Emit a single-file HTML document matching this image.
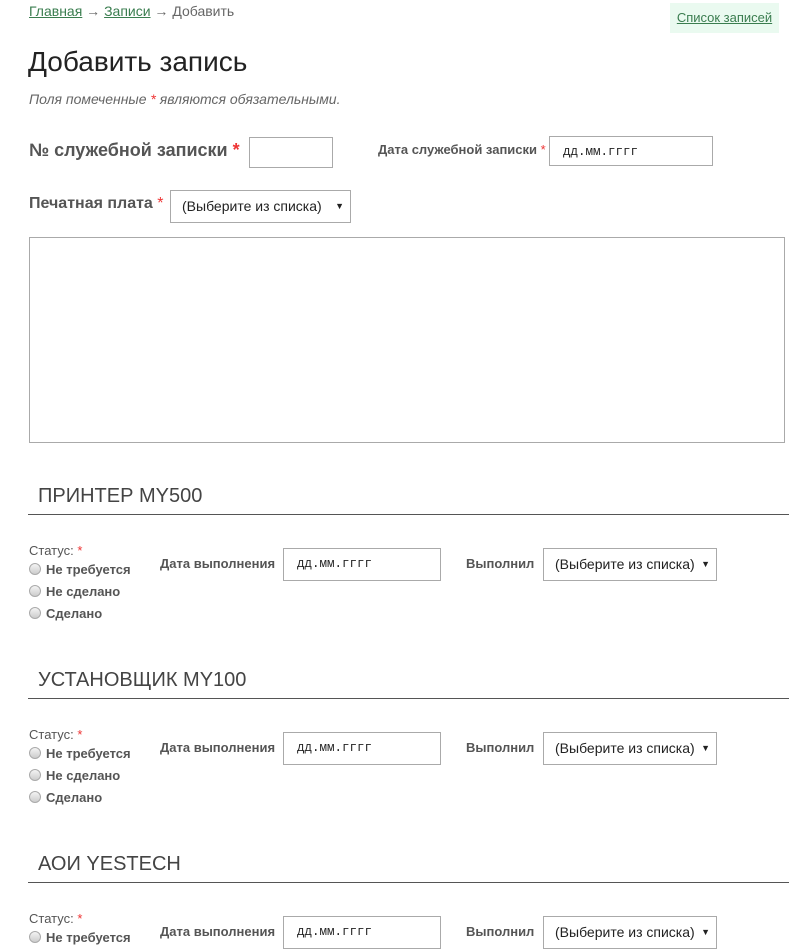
<!DOCTYPE html>
<html><head><meta charset="utf-8"><style>
body{margin:0;width:800px;height:952px;overflow:hidden;background:#fff;font-family:"Liberation Sans",Arial,sans-serif;color:#555;position:relative}
.a{position:absolute;white-space:nowrap}
a{color:#3a7d4f;text-decoration:underline}
.req{color:#e33}
.box{position:absolute;border:1px solid #aaa;background:#fff;box-sizing:border-box}
.date{font-family:"Liberation Mono",monospace;font-size:12.5px;color:#222;padding-left:13px;line-height:31px}
.sel{font-size:14px;color:#222;padding-left:11px;line-height:31px}
.sel:after{content:"▼";position:absolute;right:6px;top:0;font-size:9px}
.h{font-size:20px;color:#444}
.line{position:absolute;left:28px;width:761px;height:1px;background:#555}
.lbl{font-size:13px;font-weight:bold;color:#555}
.rad{position:absolute;width:10px;height:10px;border-radius:50%;border:1px solid #aaa;background:linear-gradient(#f4f4f4,#ccc)}
</style></head><body>
<div class="a" style="left:29px;top:3px;font-size:14px;color:#666"><a href="#">Главная</a> → <a href="#">Записи</a> → Добавить</div>
<div class="a" style="left:670px;top:3px;width:109px;height:30px;background:#eafaf0;font-size:13px;line-height:30px;text-align:center"><a href="#">Список записей</a></div>
<div class="a" style="left:28px;top:46px;font-size:28px;color:#222">Добавить запись</div>
<div class="a" style="left:29px;top:91px;font-size:14px;font-style:italic;color:#666">Поля помеченные <span class="req">*</span> являются обязательными.</div>
<div class="a" style="left:29px;top:140px;font-size:18px;font-weight:bold">№ служебной записки <span class="req">*</span></div>
<div class="box" style="left:249px;top:137px;width:84px;height:31px"></div>
<div class="a lbl" style="left:378px;top:142px">Дата служебной записки <span class="req" style="font-weight:normal">*</span></div>
<div class="box date" style="left:549px;top:136px;width:164px;height:30px">дд.мм.гггг</div>
<div class="a" style="left:29px;top:195px;font-size:16px;font-weight:bold">Печатная плата <span class="req" style="font-weight:normal">*</span></div>
<div class="box sel" style="left:170px;top:190px;width:181px;height:33px">(Выберите из списка)</div>
<div class="box" style="left:29px;top:237px;width:756px;height:206px"></div>

<div class="a h" style="left:38px;top:485px">ПРИНТЕР MY500</div>
<div class="line" style="top:514px"></div>
<div class="a" style="left:29px;top:543px;font-size:13px">Статус: <span class="req">*</span></div>
<div class="rad" style="left:29px;top:563px"></div><div class="a lbl" style="left:46px;top:562px">Не требуется</div>
<div class="rad" style="left:29px;top:585px"></div><div class="a lbl" style="left:46px;top:584px">Не сделано</div>
<div class="rad" style="left:29px;top:607px"></div><div class="a lbl" style="left:46px;top:606px">Сделано</div>
<div class="a lbl" style="left:160px;top:556px">Дата выполнения</div>
<div class="box date" style="left:283px;top:548px;width:158px;height:33px">дд.мм.гггг</div>
<div class="a lbl" style="left:466px;top:556px">Выполнил</div>
<div class="box sel" style="left:543px;top:548px;width:174px;height:33px">(Выберите из списка)</div>

<div class="a h" style="left:38px;top:669px">УСТАНОВЩИК MY100</div>
<div class="line" style="top:698px"></div>
<div class="a" style="left:29px;top:727px;font-size:13px">Статус: <span class="req">*</span></div>
<div class="rad" style="left:29px;top:747px"></div><div class="a lbl" style="left:46px;top:746px">Не требуется</div>
<div class="rad" style="left:29px;top:769px"></div><div class="a lbl" style="left:46px;top:768px">Не сделано</div>
<div class="rad" style="left:29px;top:791px"></div><div class="a lbl" style="left:46px;top:790px">Сделано</div>
<div class="a lbl" style="left:160px;top:740px">Дата выполнения</div>
<div class="box date" style="left:283px;top:732px;width:158px;height:33px">дд.мм.гггг</div>
<div class="a lbl" style="left:466px;top:740px">Выполнил</div>
<div class="box sel" style="left:543px;top:732px;width:174px;height:33px">(Выберите из списка)</div>

<div class="a h" style="left:38px;top:853px">АОИ YESTECH</div>
<div class="line" style="top:882px"></div>
<div class="a" style="left:29px;top:911px;font-size:13px">Статус: <span class="req">*</span></div>
<div class="rad" style="left:29px;top:931px"></div><div class="a lbl" style="left:46px;top:930px">Не требуется</div>
<div class="a lbl" style="left:160px;top:924px">Дата выполнения</div>
<div class="box date" style="left:283px;top:916px;width:158px;height:33px">дд.мм.гггг</div>
<div class="a lbl" style="left:466px;top:924px">Выполнил</div>
<div class="box sel" style="left:543px;top:916px;width:174px;height:33px">(Выберите из списка)</div>
</body></html>
